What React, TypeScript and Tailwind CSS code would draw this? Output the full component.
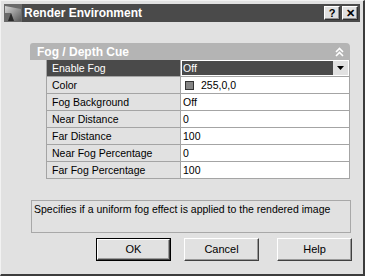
const rows = [
  { label: 'Enable Fog', value: 'Off', selected: true },
  { label: 'Color', value: '255,0,0', swatch: true },
  { label: 'Fog Background', value: 'Off' },
  { label: 'Near Distance', value: '0' },
  { label: 'Far Distance', value: '100' },
  { label: 'Near Fog Percentage', value: '0' },
  { label: 'Far Fog Percentage', value: '100' }
]

function TitleButton ({ children }: { children: React.ReactNode }) {
  return (
    <div className="w-[16px] h-[14px] bg-[#e0e0e0] border-t border-l border-white border-r border-b border-r-[#303030] border-b-[#303030] shadow-[inset_-1px_-1px_0_#909090] flex items-center justify-center text-[11px] font-bold leading-none text-black">
      {children}
    </div>
  )
}

function DialogButton ({ label, main }: { label: string, main?: boolean }) {
  return (
    <div className={(main ? 'border border-black ' : '') + 'w-[75px] h-[23px]'}>
      <div className="w-full h-full bg-[#e1e1e1] border-t border-l border-white border-r border-b border-r-[#404040] border-b-[#404040] shadow-[inset_-1px_-1px_0_#9a9a9a] flex items-center justify-center text-[11px] text-black">
        {label}
      </div>
    </div>
  )
}

export default function App () {
  return (
    <div className="w-[365px] h-[276px] bg-[#e1e1e1] border-t border-l border-[#f2f2f2] border-r-2 border-b-2 border-r-[#3c3c3c] border-b-[#3c3c3c] p-[3px] flex flex-col" style={{ fontFamily: '"Liberation Sans", Arial, sans-serif' }}>
      <div className="h-[18px] bg-[#4a4a4a] flex items-center">
        <svg width="18" height="18" viewBox="0 0 18 18">
          <defs>
            <linearGradient id="ig" x1="0" y1="0" x2="1" y2="1">
              <stop offset="0" stopColor="#d8d8d8" />
              <stop offset="1" stopColor="#5a5a5a" />
            </linearGradient>
          </defs>
          <rect x="0" y="0" width="18" height="18" fill="#6a6a6a" />
          <path d="M1 2 L17 5 L17 17 L10 17 L7 9 L1 9 Z" fill="url(#ig)" />
          <path d="M7 9 L10 17 L4 17 Z" fill="#2a2a2a" />
        </svg>
        <span className="ml-[2px] text-white font-bold text-[12px] leading-none">Render Environment</span>
        <div className="ml-auto mr-[2px] flex gap-[2px]">
          <TitleButton>?</TitleButton>
          <TitleButton>✕</TitleButton>
        </div>
      </div>

      <div className="mt-[21px] ml-[26px] w-[320px]">
        <div className="h-[17px] bg-[#b4b4b4] rounded-tl-[3px] rounded-tr-[4px] flex items-center pl-[7px] pr-[6px]">
          <span className="text-white font-bold text-[12px] leading-none">Fog / Depth Cue</span>
          <svg className="ml-auto" width="9" height="10" viewBox="0 0 9 10">
            <path d="M1 5 L4.5 1.5 L8 5 M1 9 L4.5 5.5 L8 9" stroke="white" strokeWidth="1.6" fill="none" />
          </svg>
        </div>
        <div className="ml-[16px] w-[304px] border-l border-r border-[#a4a4a4]">
          {rows.map((row) => (
            <div key={row.label} className="flex h-[17px] border-b border-[#a4a4a4] text-[10.5px] leading-none">
              <div className={(row.selected ? 'bg-[#4a4a4a] text-white ' : 'text-black ') + 'w-[134px] border-r border-[#a4a4a4] flex items-center pl-[5px]'}>
                {row.label}
              </div>
              {row.selected
                ? (
                  <div className="flex-1 bg-[#4a4a4a] border border-white flex items-center text-white">
                    <span className="pl-[1px]">{row.value}</span>
                    <div className="ml-auto w-[15px] h-full bg-[#e1e1e1] flex items-center justify-center">
                      <svg width="7" height="4" viewBox="0 0 7 4"><path d="M0 0 L7 0 L3.5 4 Z" fill="black" /></svg>
                    </div>
                  </div>
                  )
                : (
                  <div className="flex-1 bg-white flex items-center pl-[2px] text-black">
                    {row.swatch && <span className="w-[9px] h-[9px] bg-[#858585] border border-[#333] ml-[2px] mr-[7px]" />}
                    {row.value}
                  </div>
                  )}
            </div>
          ))}
        </div>
      </div>

      <div className="mt-[21px] ml-[27px] w-[320px] h-[33px] border border-[#a8a8a8] px-[2px] pt-[3px] text-[10.5px] leading-none text-black">
        Specifies if a uniform fog effect is applied to the rendered image
      </div>

      <div className="mt-[5px] ml-[92px] flex">
        <DialogButton label="OK" main />
        <div className="ml-[13px]"><DialogButton label="Cancel" /></div>
        <div className="ml-[18px]"><DialogButton label="Help" /></div>
      </div>
    </div>
  )
}
